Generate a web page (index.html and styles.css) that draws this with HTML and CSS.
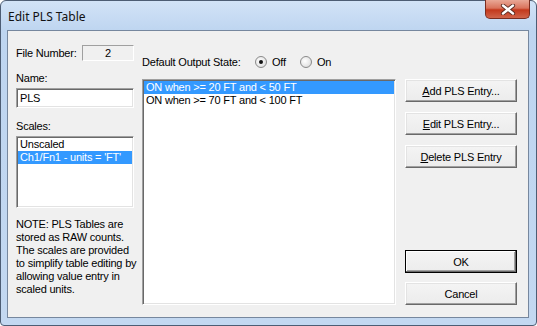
FILE: index.html
```html
<!DOCTYPE html>
<html lang="en">
  <head>
    <meta charset="UTF-8">
    <title>Edit PLS Table</title>
    <link rel="stylesheet" href="styles.css">
  </head>
  <body>
    <div class="window">
      <div class="titlebar">
        <span class="title">Edit PLS Table</span>
        <div class="close">
          <svg width="16" height="11" viewBox="0 0 16 11">
            <path d="M3 1.5 L13 9.5 M13 1.5 L3 9.5" stroke="#5a2a20" stroke-width="4.2" stroke-linecap="round"/>
            <path d="M3 1.5 L13 9.5 M13 1.5 L3 9.5" stroke="#fff" stroke-width="2.4" stroke-linecap="round"/>
          </svg>
        </div>
      </div>
      <div class="client">
        <div class="col-left">
          <div class="filerow">
            <span class="filelabel">File Number:</span>
            <span class="filebox">2</span>
          </div>
          <div class="label name-label">Name:</div>
          <div class="edit sunken">PLS</div>
          <div class="label scales-label">Scales:</div>
          <div class="list sunken scales">
            <div class="item">Unscaled</div>
            <div class="item selected">Ch1/Fn1 - units = 'FT'</div>
          </div>
          <p class="note">NOTE: PLS Tables are<br>stored as RAW counts.<br>The scales are provided<br>to simplify table editing by<br>allowing value entry in<br>scaled units.</p>
        </div>
        <div class="col-mid">
          <div class="staterow">
            <span class="statelabel">Default Output State:</span>
            <span class="radio checked"></span><span class="radiotext">Off</span>
            <span class="radio"></span><span class="radiotext">On</span>
          </div>
          <div class="list sunken entries">
            <div class="item selected">ON when &gt;= 20 FT and &lt; 50 FT</div>
            <div class="item">ON when &gt;= 70 FT and &lt; 100 FT</div>
          </div>
        </div>
        <div class="col-right">
          <button class="btn"><u>A</u>dd PLS Entry...</button>
          <button class="btn"><u>E</u>dit PLS Entry...</button>
          <button class="btn"><u>D</u>elete PLS Entry</button>
          <button class="btn default ok">OK</button>
          <button class="btn">Cancel</button>
        </div>
      </div>
    </div>
  </body>
</html>
```
FILE: styles.css
```css
body {
  margin: 0;
  font-family: "Liberation Sans", Arial, sans-serif;
  font-size: 11px;
  letter-spacing: -0.2px;
  color: #000;
}
.window {
  width: 537px;
  height: 326px;
  box-sizing: border-box;
  border: 1px solid #4d5d74;
  border-radius: 6px 6px 4px 4px;
  background: linear-gradient(#d2e3f7, #bed5f0 30px, #c3d8f1);
  padding: 0 7px 7px 6px;
  display: flex;
  flex-direction: column;
}
.titlebar {
  height: 29px;
  display: flex;
  align-items: flex-start;
  position: relative;
}
.title {
  font-family: "Noto Sans", "Open Sans", sans-serif;
  font-size: 12px;
  letter-spacing: 0;
  margin: 7px 0 0 1px;
  color: #111;
}
.close {
  position: absolute;
  right: -1px;
  top: -1px;
  width: 45px;
  height: 19px;
  box-sizing: border-box;
  border: 1px solid #7a2d20;
  border-top: none;
  border-radius: 0 0 5px 5px;
  background: linear-gradient(#e9a896, #d9735c 45%, #c3381c 55%, #d0644a);
  display: flex;
  align-items: center;
  justify-content: center;
}
.client {
  flex: 1;
  border: 1px solid #76879e;
  background: #f0f0f0;
  display: flex;
  padding: 0 10px 12px 8px;
}
.col-left {
  width: 118px;
  display: flex;
  flex-direction: column;
}
.filerow {
  display: flex;
  align-items: center;
  margin-top: 14px;
  height: 16px;
}
.filelabel {
  width: 66px;
}
.filebox {
  width: 52px;
  height: 16px;
  box-sizing: border-box;
  border: 1px solid;
  border-color: #a0a0a0 #fff #fff #a0a0a0;
  text-align: center;
  line-height: 14px;
}
.label {
  line-height: 13px;
}
.name-label {
  margin-top: 11px;
}
.sunken {
  border: 1px solid;
  border-color: #a0a0a0 #fff #fff #a0a0a0;
  box-shadow: inset 1px 1px #696969, inset -1px -1px #e3e3e3;
  background: #fff;
}
.edit {
  margin-top: 3px;
  height: 20px;
  box-sizing: border-box;
  padding: 2px 3px;
  line-height: 15px;
}
.scales-label {
  margin-top: 12px;
}
.list {
  box-sizing: border-box;
  padding: 1px;
}
.item {
  height: 13px;
  line-height: 13px;
  padding-left: 2px;
  white-space: nowrap;
}
.item.selected {
  background: #3399ff;
  color: #fff;
}
.scales {
  margin-top: 3px;
  height: 72px;
}
.note {
  margin: 10px 0 0;
  line-height: 13px;
  white-space: nowrap;
}
.col-mid {
  width: 254px;
  margin-left: 8px;
  display: flex;
  flex-direction: column;
}
.staterow {
  display: flex;
  align-items: center;
  margin-top: 24px;
  height: 13px;
}
.statelabel {
  width: 113px;
}
.radio {
  width: 12px;
  height: 12px;
  box-sizing: border-box;
  border-radius: 50%;
  border: 1px solid #8a8a8a;
  background: radial-gradient(circle at 40% 40%, #fff, #e6e6e6 60%, #cfcfcf);
  display: flex;
  align-items: center;
  justify-content: center;
  margin-right: 5px;
}
.radio.checked::after {
  content: "";
  width: 4px;
  height: 4px;
  border-radius: 50%;
  background: #111;
}
.radiotext {
  width: 28px;
}
.entries {
  margin-top: 11px;
  flex: 1;
}
.col-right {
  width: 112px;
  margin-left: 9px;
  display: flex;
  flex-direction: column;
}
.btn {
  font: inherit;
  letter-spacing: inherit;
  height: 23px;
  padding: 0;
  margin-bottom: 10px;
  background: linear-gradient(#f4f4f4, #ececec);
  border: 1px solid;
  border-color: #fff #696969 #696969 #fff;
  box-shadow: inset -1px -1px #a0a0a0, inset 1px 1px #e3e3e3;
  color: #000;
}
.btn:first-child {
  margin-top: 48px;
}
.btn.ok {
  margin-top: auto;
  margin-bottom: 9px;
}
.btn:last-child {
  margin-bottom: 0;
}
.btn.default {
  border-color: #000;
  box-shadow: inset -1px -1px #696969, inset 1px 1px #fff, inset -2px -2px #a0a0a0;
}
```
